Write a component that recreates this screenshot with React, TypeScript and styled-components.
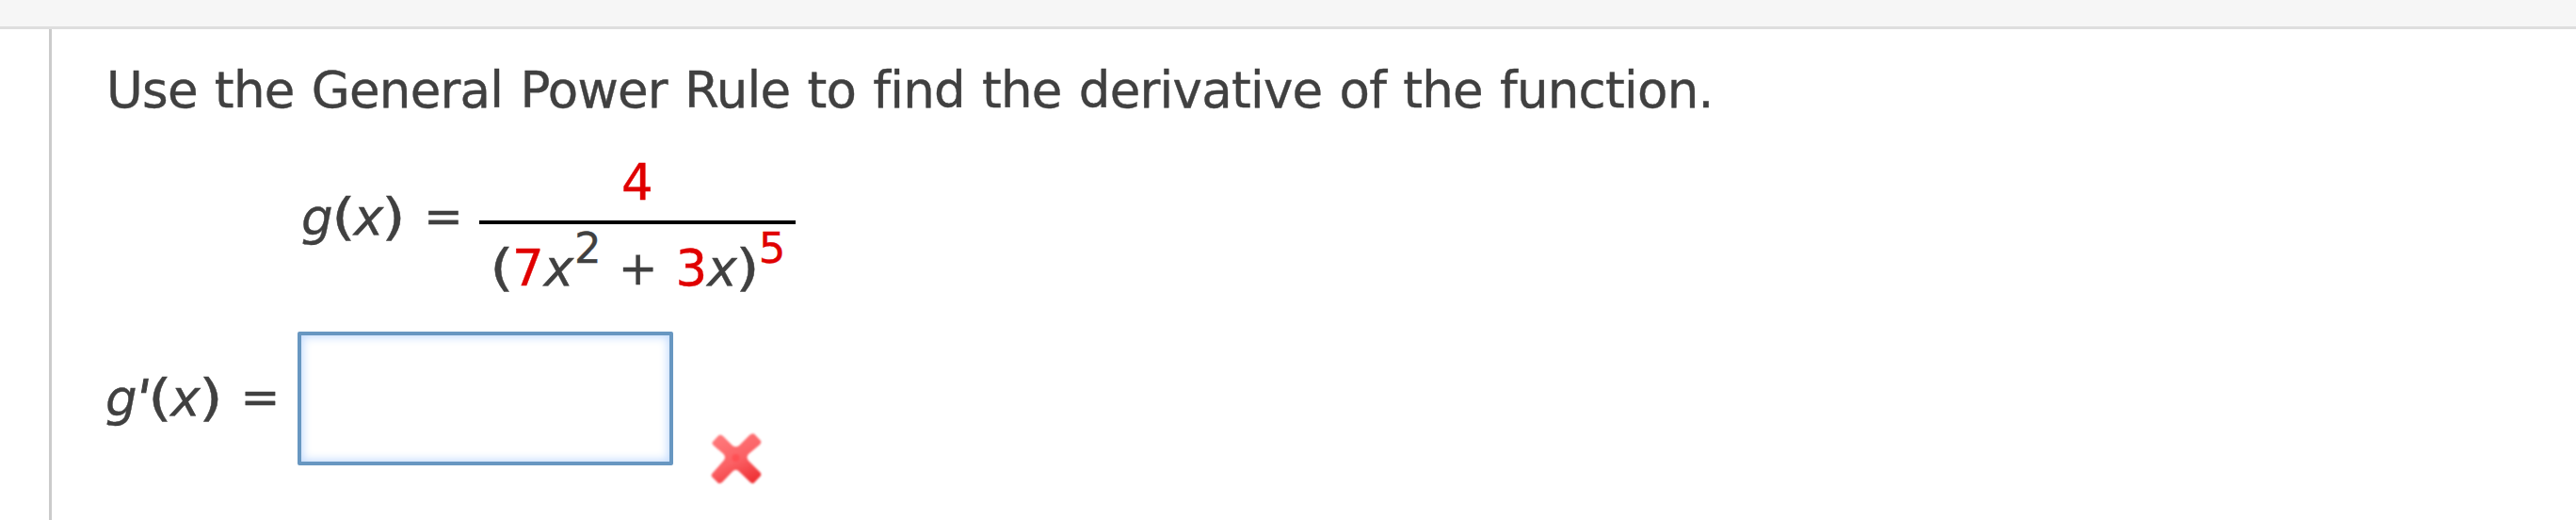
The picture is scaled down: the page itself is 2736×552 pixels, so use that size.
import styled, { createGlobalStyle } from "styled-components";

export default function App() {
  return (
    <>
      <GlobalStyle />
      <Header />
      <Panel>
        <Prompt>Use the General Power Rule to find the derivative of the function.</Prompt>
        <Equation />
        <Answer />
      </Panel>
    </>
  );
}

function Equation() {
  return (
    <EquationRow>
      <FunctionName>
        <i>g</i>
        <Paren>(</Paren>
        <i>x</i>
        <Paren>)</Paren>
      </FunctionName>
      <Equals>=</Equals>
      <Fraction>
        <Numerator>
          <Value>4</Value>
        </Numerator>
        <Denominator>
          <Paren>(</Paren>
          <Value>7</Value>
          <i>x</i>
          <Sup>2</Sup>
          <Plus>+</Plus>
          <Value>3</Value>
          <i>x</i>
          <Paren>)</Paren>
          <Sup>
            <Value>5</Value>
          </Sup>
        </Denominator>
      </Fraction>
    </EquationRow>
  );
}

function Answer() {
  return (
    <AnswerRow>
      <AnswerLabel>
        <i>g</i>
        <Prime>'</Prime>
        <Paren>(</Paren>
        <i>x</i>
        <Paren>)</Paren>
      </AnswerLabel>
      <AnswerEquals>=</AnswerEquals>
      <AnswerInput aria-label="g prime of x" />
      <WrongMark />
    </AnswerRow>
  );
}

function WrongMark() {
  return (
    <Mark viewBox="0 0 54 56" aria-label="incorrect">
      <defs>
        <linearGradient id="mark" x1="0.2" y1="0" x2="0.7" y2="1">
          <stop offset="0" stopColor="#ff7a7c" />
          <stop offset="0.55" stopColor="#fb6165" />
          <stop offset="1" stopColor="#ef3337" />
        </linearGradient>
      </defs>
      <path
        d="M10 2.5 Q12 2.5 14 5 L23 14 Q26.500 16.500 30 14 L41 3 Q44 0.500 46 1.500 L53 9 Q54 11 52 13 L40 23 Q37 26.500 40 30 L52 42 Q54 44 53 46 L46 53.500 Q44 55 42 53 L30 41.500 Q26.500 38 23 41.500 L12 53 Q9 55 7.500 53.500 L1 47 Q0 45 2 43 L13.500 30 Q16.500 26.500 13.500 23 L3 14 Q0.500 11.500 2 10 L8 3.500 Z"
        fill="url(#mark)"
      />
      <circle cx="26.500" cy="27" r="4" fill="#ff484d" opacity="0.7" />
    </Mark>
  );
}

const GlobalStyle = createGlobalStyle`
  body {
    margin: 0;
    background: white;
    color: #404040;
    font-family: Verdana, "DejaVu Sans", sans-serif;
    font-variant-ligatures: none;
    -webkit-text-stroke: 0.4px;
    overflow: hidden;
  }
`;

const Header = styled.header`
  height: 28px;
  background: #f6f6f6;
  border-bottom: 3px solid #dedede;
`;

const Panel = styled.main`
  box-sizing: border-box;
  height: 521px;
  margin-left: 52px;
  padding: 25px 0 0 58px;
  border-left: 3px solid #cbcbcb;
`;

const Prompt = styled.p`
  margin: 0;
  font-size: 53px;
  line-height: 80px;
  letter-spacing: -0.75px;
  word-spacing: 2px;
  white-space: nowrap;
`;

const MathRow = styled.div`
  display: flex;
  align-items: flex-start;
  font-size: 53px;
  line-height: 80px;
  white-space: nowrap;
`;

const EquationRow = styled(MathRow)`
  padding-left: 207px;
`;

const FunctionName = styled.div`
  display: flex;
  margin-top: 55px;
`;

const Paren = styled.span`
  width: 22px;
  text-align: center;
  transform: scaleX(1.25);
`;

const Equals = styled.div`
  margin: 54px 17px 0 21px;
  font-size: 50px;
`;

const Fraction = styled.div`
  width: 336px;
`;

const Numerator = styled.div`
  padding: 34px 0 16px;
  line-height: 48px;
  text-align: center;
  border-bottom: 4px solid black;
`;

const Denominator = styled.div`
  display: flex;
  padding: 7px 0 0 13px;
`;

const Value = styled.span`
  color: #e00000;
`;

const Sup = styled.span`
  margin: -21px 0 0 1px;
  font-size: 45px;
`;

const Plus = styled.span`
  margin: 0 19px 0 18px;
  font-size: 50px;
`;

const AnswerRow = styled(MathRow)`
  margin: 27px 0 0 -1px;
`;

const AnswerLabel = styled.div`
  display: flex;
  margin-top: 31px;
`;

const AnswerEquals = styled(Equals)`
  margin-top: 30px;
  margin-right: 18px;
`;

const Prime = styled.i`
  margin: 0 -2px 0 1px;
  transform: skewX(-10deg);
  transform-origin: 50% 30%;
  -webkit-text-stroke: 1px;
`;

const AnswerInput = styled.input`
  box-sizing: border-box;
  width: 399px;
  height: 142px;
  border: 4px solid #6897c1;
  border-radius: 2px;
  box-shadow: inset 0 0 10px 2px #c4dcff;
  background: white;
  font: inherit;
  outline: none;
`;

const Mark = styled.svg`
  width: 54px;
  height: 56px;
  margin: 107px 0 0 40px;
  filter: blur(0.8px);
`;
